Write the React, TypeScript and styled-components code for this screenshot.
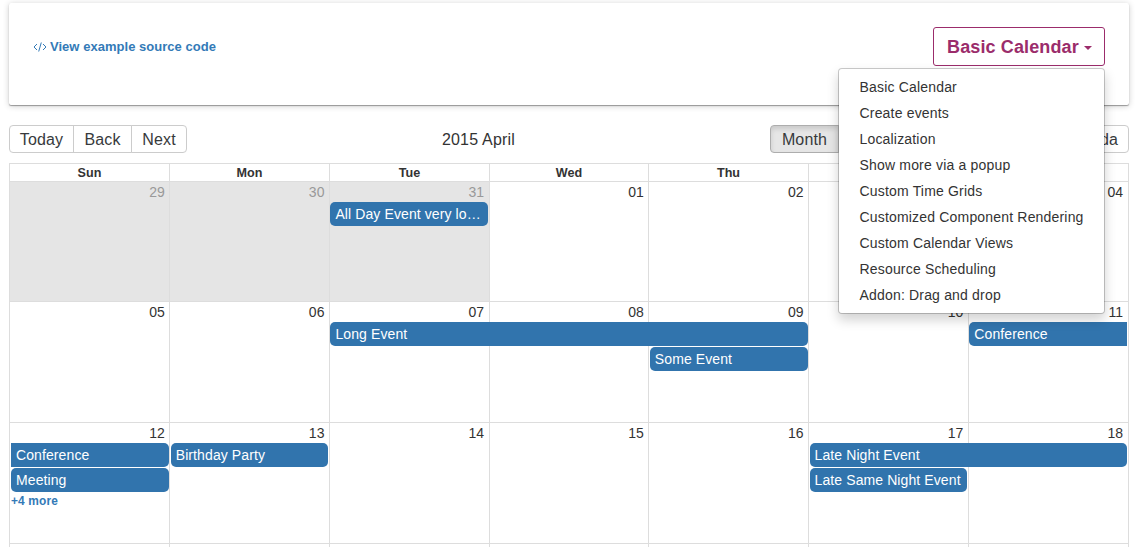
import React from 'react';
import styled, { createGlobalStyle } from 'styled-components';

const GlobalStyle = createGlobalStyle`
    * {
        box-sizing: border-box;
    }
    body {
        margin: 0;
        background: #fff;
        color: #333;
        font-family: "Liberation Sans", Arial, sans-serif;
        font-size: 14px;
        line-height: 20px;
        overflow: hidden;
    }
`

const Page = styled.div`
    height: 547px;
    padding: 3px 8px 0 9px;
    overflow: hidden;
`

const Card = styled.header`
    display: flex;
    justify-content: space-between;
    align-items: flex-start;
    height: 102px;
    padding: 24px 24px 0;
    border-radius: 2px;
    background: #fff;
    box-shadow: 0 1px 1px rgba(0, 0, 0, 0.34), 0 1px 6px rgba(0, 0, 0, 0.2);
`

const SourceLink = styled.a`
    display: flex;
    align-items: center;
    gap: 3px;
    margin-top: 10px;
    color: #337ab7;
    font-size: 13px;
    font-weight: bold;
    letter-spacing: 0.03px;
`

const ExampleDropdown = styled.div`
    position: relative;
`

const DropdownToggle = styled.button`
    display: flex;
    align-items: center;
    gap: 5px;
    width: 172px;
    height: 39px;
    padding: 2px 12px 0 13px;
    border: 1px solid #9b2c6b;
    border-radius: 3px;
    background: #fff;
    color: #9b2c6b;
    font: bold 18px "Liberation Sans", Arial, sans-serif;
    letter-spacing: 0.13px;
    white-space: nowrap;
`

const Caret = styled.span`
    border-top: 4px solid;
    border-left: 4px solid transparent;
    border-right: 4px solid transparent;
    margin-top: 1px;
`

const DropdownMenu = styled.ul`
    position: absolute;
    z-index: 10;
    top: 41px;
    right: 0;
    width: 267px;
    margin: 0;
    padding: 5px 0;
    list-style: none;
    border: 1px solid rgba(0, 0, 0, 0.2);
    border-radius: 4px;
    background: #fff;
    background-clip: padding-box;
    box-shadow: 0 6px 12px rgba(0, 0, 0, 0.175);
`

const MenuItem = styled.li`
    padding: 3px 20px 3px 20.5px;
    white-space: nowrap;
    letter-spacing: 0.18px;
`

const Toolbar = styled.div`
    display: flex;
    justify-content: space-between;
    align-items: center;
    height: 28px;
    margin: 20px 0 10px;
    font-size: 16px;
`

const ToolbarLabel = styled.span`
    flex: 1;
    padding-top: 2px;
    text-align: center;
    letter-spacing: 0.2px;
`

const ButtonGroup = styled.div`
    display: flex;
`

const ToolbarButton = styled.button<{ $width: number, $active?: boolean }>`
    width: ${({ $width }) => $width}px;
    height: 28px;
    padding: 2px 0 0;
    border: 1px solid ${({ $active }) => $active ? '#adadad' : '#ccc'};
    background: ${({ $active }) => $active ? '#e6e6e6' : '#fff'};
    box-shadow: ${({ $active }) => $active ? 'inset 0 3px 5px rgba(0, 0, 0, 0.125)' : 'none'};
    color: #373a3c;
    font: 16px "Liberation Sans", Arial, sans-serif;
    letter-spacing: 0.15px;
    white-space: nowrap;

    & + & {
        margin-left: -1px;
    }
    &:first-child {
        border-radius: 4px 0 0 4px;
    }
    &:last-child {
        border-radius: 0 4px 4px 0;
    }
`

const MonthView = styled.div`
    border: 1px solid #ddd;
    border-bottom: 0;
`

const dayColumns = '159px 160px 160px 159px 160px 160px 160px'

const HeaderRow = styled.div`
    display: grid;
    grid-template-columns: ${dayColumns};
    height: 18px;
    border-bottom: 1px solid #ddd;
`

const HeaderCell = styled.div`
    font-size: 12.6px;
    font-weight: bold;
    line-height: 18px;
    text-align: center;

    & + & {
        border-left: 1px solid #ddd;
    }
`

const WeekRow = styled.div<{ $first: boolean }>`
    display: grid;
    height: ${({ $first }) => $first ? 119 : 121}px;
    border-top: ${({ $first }) => $first ? '0' : '1px solid #ddd'};
`

const WeekBackground = styled.div`
    grid-area: 1 / 1;
    display: grid;
    grid-template-columns: ${dayColumns};
`

const DayBackground = styled.div<{ $offRange: boolean }>`
    background: ${({ $offRange }) => $offRange ? '#e5e5e5' : 'transparent'};

    & + & {
        border-left: 1px solid #ddd;
    }
`

const WeekContent = styled.div`
    grid-area: 1 / 1;
    display: grid;
    grid-template-columns: repeat(7, minmax(0, 1fr));
    grid-template-rows: 20px 25px 25px;
    align-content: start;
`

const DateCell = styled.div<{ $offRange: boolean }>`
    padding-right: 5px;
    text-align: right;
    color: ${({ $offRange }) => $offRange ? '#999' : '#333'};
`

const EventSegment = styled.div<{ $start: number, $span: number, $level: number }>`
    grid-column: ${({ $start, $span }) => `${$start} / span ${$span}`};
    grid-row: ${({ $level }) => $level + 1};
    padding: 0 1px 1px;
`

const EventBar = styled.div<{ $before?: boolean, $after?: boolean }>`
    height: 24px;
    padding: 2px 5px;
    overflow: hidden;
    text-overflow: ellipsis;
    white-space: nowrap;
    letter-spacing: 0.1px;
    color: #fff;
    background: #3174ad;
    border-radius: ${({ $before, $after }) => `${$before ? 0 : 5}px ${$after ? 0 : 5}px ${$after ? 0 : 5}px ${$before ? 0 : 5}px`};
`

const ShowMore = styled.a`
    grid-column: 1;
    grid-row: 4;
    padding-left: 1px;
    color: #337ab7;
    font-size: 11.9px;
    font-weight: bold;
    letter-spacing: 0.15px;
    line-height: 17px;
`

type EventType = {
    title: string
    start: number
    span: number
    level: number
    before?: boolean
    after?: boolean
}

type WeekType = {
    days: string[]
    offRange: number
    events: EventType[]
    more?: string
}

const examples = [
    'Basic Calendar', 'Create events', 'Localization', 'Show more via a popup', 'Custom Time Grids',
    'Customized Component Rendering', 'Custom Calendar Views', 'Resource Scheduling', 'Addon: Drag and drop'
]

const weekdays = ['Sun', 'Mon', 'Tue', 'Wed', 'Thu', 'Fri', 'Sat']

const weeks: WeekType[] = [
    {
        days: ['29', '30', '31', '01', '02', '03', '04'],
        offRange: 3,
        events: [{ title: 'All Day Event very long title', start: 3, span: 1, level: 1 }]
    },
    {
        days: ['05', '06', '07', '08', '09', '10', '11'],
        offRange: 0,
        events: [
            { title: 'Long Event', start: 3, span: 3, level: 1 },
            { title: 'Conference', start: 7, span: 1, level: 1, after: true },
            { title: 'Some Event', start: 5, span: 1, level: 2 }
        ]
    },
    {
        days: ['12', '13', '14', '15', '16', '17', '18'],
        offRange: 0,
        events: [
            { title: 'Conference', start: 1, span: 1, level: 1, before: true },
            { title: 'Birthday Party', start: 2, span: 1, level: 1 },
            { title: 'Late Night Event', start: 6, span: 2, level: 1 },
            { title: 'Meeting', start: 1, span: 1, level: 2 },
            { title: 'Late Same Night Event', start: 6, span: 1, level: 2 }
        ],
        more: '+4 more'
    },
    { days: ['19', '20', '21', '22', '23', '24', '25'], offRange: 0, events: [] }
]

const CodeIcon: React.FC = () => (
    <svg width="14" height="12" viewBox="0 0 14 12" fill="none" stroke="currentColor" strokeWidth="1">
        <path d="M4 3L1 6l3 3M10 3l3 3-3 3M8.3 1.5l-2.6 9" />
    </svg>
)

type WeekPropsType = {
    week: WeekType
    first: boolean
}

const Week: React.FC<WeekPropsType> = ({ week, first }) => {
    return (
        <WeekRow $first={first}>
            <WeekBackground>
                {week.days.map((day, i) => <DayBackground key={day} $offRange={i < week.offRange} />)}
            </WeekBackground>
            <WeekContent>
                {week.days.map((day, i) => <DateCell key={day} $offRange={i < week.offRange}>{day}</DateCell>)}
                {week.events.map(e => (
                    <EventSegment key={e.title} $start={e.start} $span={e.span} $level={e.level}>
                        <EventBar $before={e.before} $after={e.after}>{e.title}</EventBar>
                    </EventSegment>
                ))}
                {week.more && <ShowMore>{week.more}</ShowMore>}
            </WeekContent>
        </WeekRow>
    )
}

const App: React.FC = () => {
    return (
        <Page>
            <GlobalStyle />
            <Card>
                <SourceLink><CodeIcon />View example source code</SourceLink>
                <ExampleDropdown>
                    <DropdownToggle>Basic Calendar<Caret /></DropdownToggle>
                    <DropdownMenu>
                        {examples.map(name => <MenuItem key={name}>{name}</MenuItem>)}
                    </DropdownMenu>
                </ExampleDropdown>
            </Card>
            <Toolbar>
                <ButtonGroup>
                    <ToolbarButton $width={65}>Today</ToolbarButton>
                    <ToolbarButton $width={59}>Back</ToolbarButton>
                    <ToolbarButton $width={56}>Next</ToolbarButton>
                </ButtonGroup>
                <ToolbarLabel>2015 April</ToolbarLabel>
                <ButtonGroup>
                    <ToolbarButton $width={69} $active>Month</ToolbarButton>
                    <ToolbarButton $width={62}>Week</ToolbarButton>
                    <ToolbarButton $width={101}>Work Week</ToolbarButton>
                    <ToolbarButton $width={53}>Day</ToolbarButton>
                    <ToolbarButton $width={78}>Agenda</ToolbarButton>
                </ButtonGroup>
            </Toolbar>
            <MonthView>
                <HeaderRow>
                    {weekdays.map(day => <HeaderCell key={day}>{day}</HeaderCell>)}
                </HeaderRow>
                {weeks.map((week, i) => <Week key={week.days[0]} week={week} first={i === 0} />)}
            </MonthView>
        </Page>
    )
}

export default App;
